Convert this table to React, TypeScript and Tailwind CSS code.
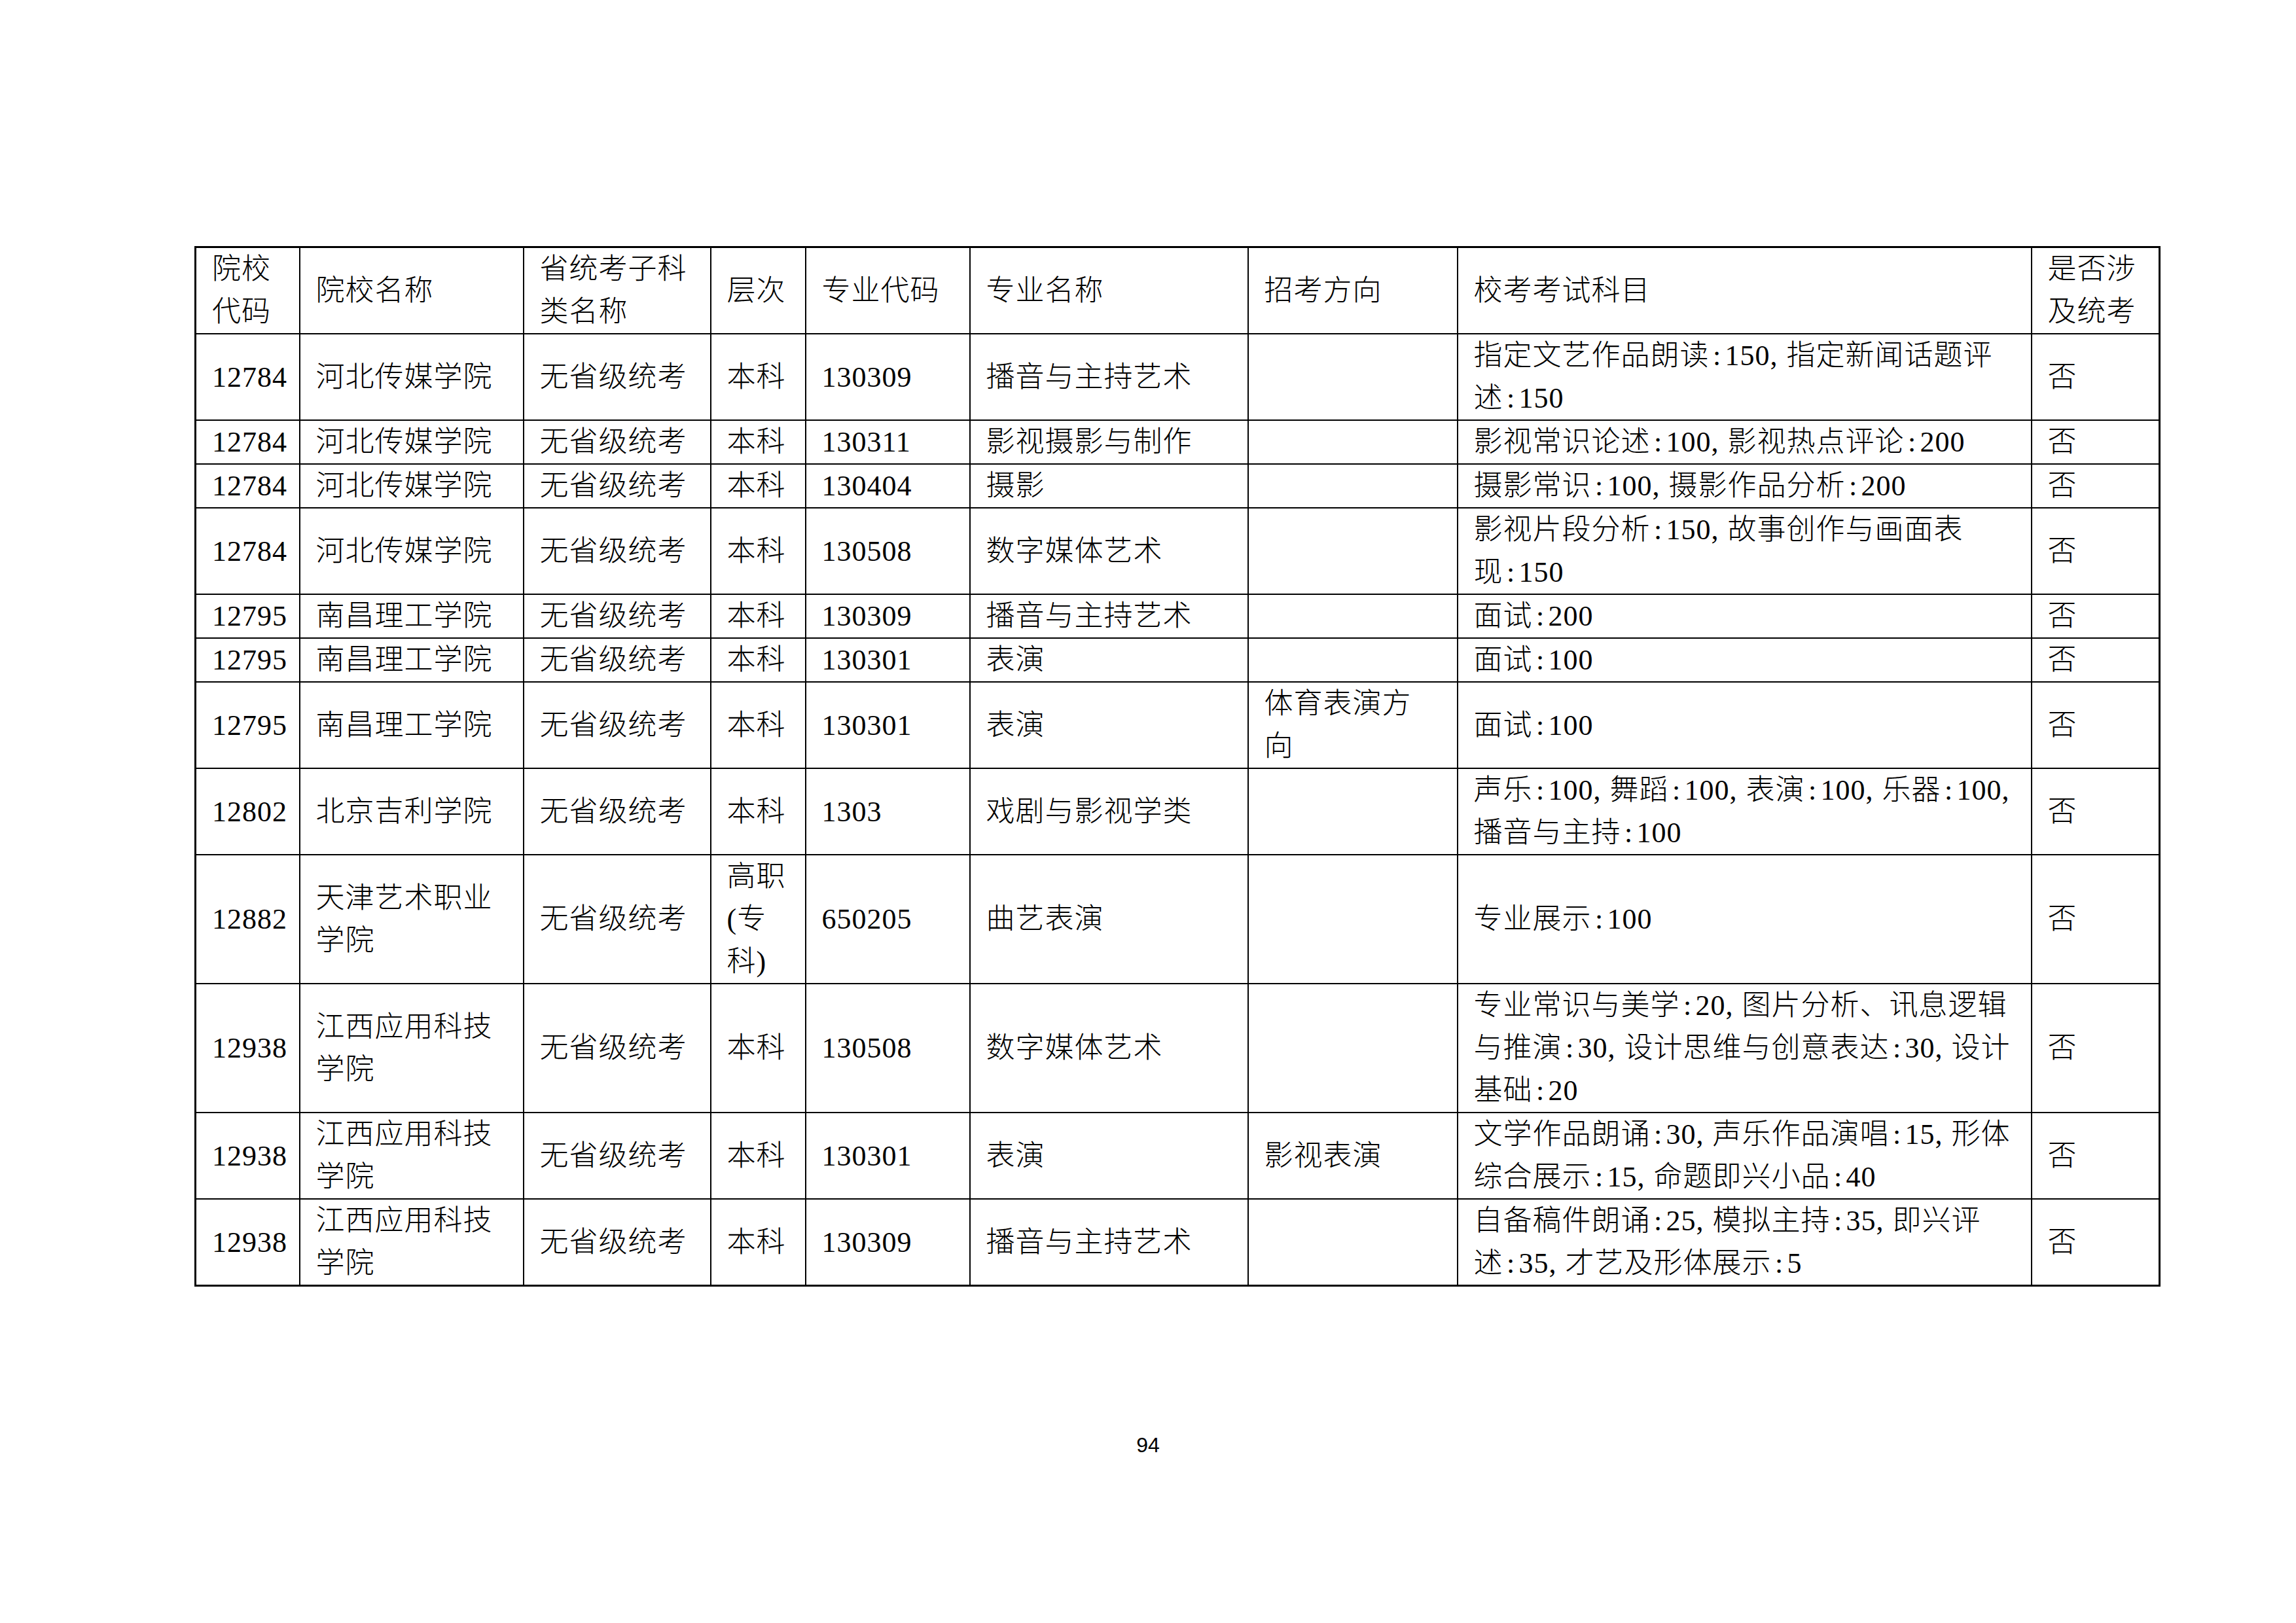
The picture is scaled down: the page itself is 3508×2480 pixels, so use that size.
const header: string[][] = [
  ["院校", "代码"],
  ["院校名称"],
  ["省统考子科", "类名称"],
  ["层次"],
  ["专业代码"],
  ["专业名称"],
  ["招考方向"],
  ["校考考试科目"],
  ["是否涉", "及统考"],
];

// each cell is a list of lines, wrapped the same way as the printed page
const rows: string[][][] = [
  [["12784"], ["河北传媒学院"], ["无省级统考"], ["本科"], ["130309"], ["播音与主持艺术"], [], ["指定文艺作品朗读:150,指定新闻话题评", "述:150"], ["否"]],
  [["12784"], ["河北传媒学院"], ["无省级统考"], ["本科"], ["130311"], ["影视摄影与制作"], [], ["影视常识论述:100,影视热点评论:200"], ["否"]],
  [["12784"], ["河北传媒学院"], ["无省级统考"], ["本科"], ["130404"], ["摄影"], [], ["摄影常识:100,摄影作品分析:200"], ["否"]],
  [["12784"], ["河北传媒学院"], ["无省级统考"], ["本科"], ["130508"], ["数字媒体艺术"], [], ["影视片段分析:150,故事创作与画面表", "现:150"], ["否"]],
  [["12795"], ["南昌理工学院"], ["无省级统考"], ["本科"], ["130309"], ["播音与主持艺术"], [], ["面试:200"], ["否"]],
  [["12795"], ["南昌理工学院"], ["无省级统考"], ["本科"], ["130301"], ["表演"], [], ["面试:100"], ["否"]],
  [["12795"], ["南昌理工学院"], ["无省级统考"], ["本科"], ["130301"], ["表演"], ["体育表演方", "向"], ["面试:100"], ["否"]],
  [["12802"], ["北京吉利学院"], ["无省级统考"], ["本科"], ["1303"], ["戏剧与影视学类"], [], ["声乐:100,舞蹈:100,表演:100,乐器:100,", "播音与主持:100"], ["否"]],
  [["12882"], ["天津艺术职业", "学院"], ["无省级统考"], ["高职", "(专", "科)"], ["650205"], ["曲艺表演"], [], ["专业展示:100"], ["否"]],
  [["12938"], ["江西应用科技", "学院"], ["无省级统考"], ["本科"], ["130508"], ["数字媒体艺术"], [], ["专业常识与美学:20,图片分析、讯息逻辑", "与推演:30,设计思维与创意表达:30,设计", "基础:20"], ["否"]],
  [["12938"], ["江西应用科技", "学院"], ["无省级统考"], ["本科"], ["130301"], ["表演"], ["影视表演"], ["文学作品朗诵:30,声乐作品演唱:15,形体", "综合展示:15,命题即兴小品:40"], ["否"]],
  [["12938"], ["江西应用科技", "学院"], ["无省级统考"], ["本科"], ["130309"], ["播音与主持艺术"], [], ["自备稿件朗诵:25,模拟主持:35,即兴评", "述:35,才艺及形体展示:5"], ["否"]],
];

// the page sets ':' and ',' in half-width boxes, wider than the serif glyphs
function Line({ text }: { text: string }) {
  const parts = text.split(/([:,])/);
  return (
    <div>
      {parts.map((p, i) =>
        p === ":" ? (
          <span key={i} className="inline-block w-[24px] text-center">:</span>
        ) : p === "," ? (
          <span key={i} className="inline-block w-[25px] text-left">,</span>
        ) : (
          <span key={i}>{p}</span>
        )
      )}
    </div>
  );
}

function Cell({ lines }: { lines: string[] }) {
  return (
    <td className="border-2 border-black pl-[24px] pr-[6px] py-0 align-middle leading-[65px] whitespace-nowrap">
      {lines.map((l, i) => (
        <Line key={i} text={l} />
      ))}
    </td>
  );
}

export default function App() {
  return (
    <div className="w-[3508px] h-[2480px] bg-white text-black flex flex-col pt-[376px]">
      <table className="ml-[297px] w-[3001px] table-fixed border-collapse border-[3px] border-black font-['Liberation_Serif','Noto_Sans_CJK_SC',serif] font-light text-[44px] tracking-[1px]">
        <colgroup>
          <col className="w-[159px]" />
          <col className="w-[342px]" />
          <col className="w-[286px]" />
          <col className="w-[145px]" />
          <col className="w-[251px]" />
          <col className="w-[425px]" />
          <col className="w-[320px]" />
          <col className="w-[877px]" />
          <col className="w-[196px]" />
        </colgroup>
        <thead>
          <tr>
            {header.map((h, i) => (
              <Cell key={i} lines={h} />
            ))}
          </tr>
        </thead>
        <tbody>
          {rows.map((r, i) => (
            <tr key={i}>
              {r.map((c, j) => (
                <Cell key={j} lines={c} />
              ))}
            </tr>
          ))}
        </tbody>
      </table>
      <div className="mt-[223px] text-center font-['Liberation_Sans',sans-serif] text-[32px] leading-[38px]">94</div>
    </div>
  );
}
